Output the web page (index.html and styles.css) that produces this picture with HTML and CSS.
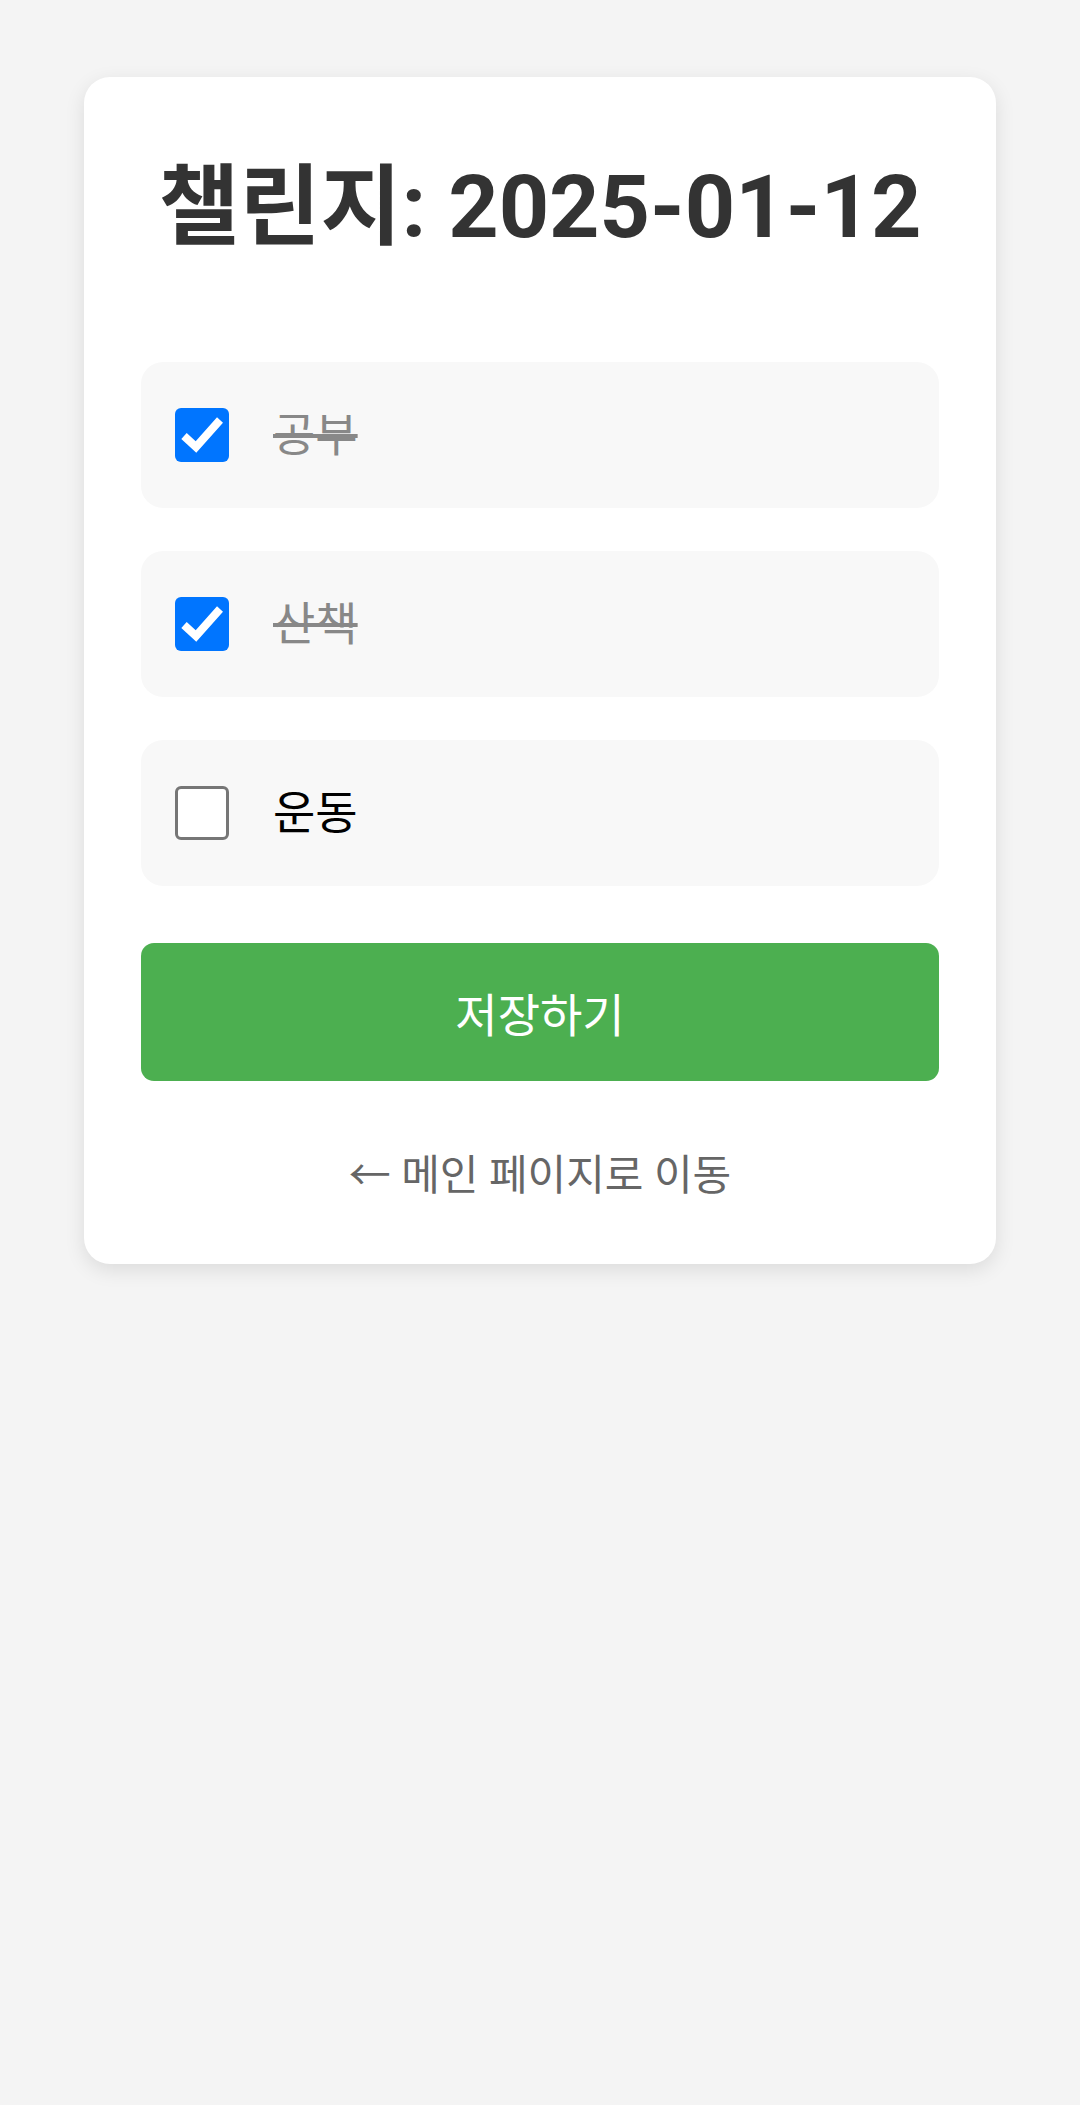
FILE: index.html
```html
<!DOCTYPE html>
<html lang="ko">
	<head>
		<meta charset="UTF-8">
		<title>챌린지</title>
		<link rel="stylesheet" href="styles.css">
	</head>
	<body>
		<div class="wrap">
			<div class="card">
				<h1 class="title">챌린지: 2025-01-12</h1>

				<label class="task done">
					<span class="box on">
						<svg viewBox="0 0 54 54" width="54" height="54"><path d="M9 28 L21 39 L45 12" fill="none" stroke="#fff" stroke-width="8"/></svg>
					</span>
					<span class="name">공부</span>
				</label>
				<label class="task done">
					<span class="box on">
						<svg viewBox="0 0 54 54" width="54" height="54"><path d="M9 28 L21 39 L45 12" fill="none" stroke="#fff" stroke-width="8"/></svg>
					</span>
					<span class="name">산책</span>
				</label>
				<label class="task">
					<span class="box"></span>
					<span class="name">운동</span>
				</label>

				<button class="save">저장하기</button>

				<a href="javascript:;" class="back">← 메인 페이지로 이동</a>
			</div>
		</div>
	</body>
</html>
```

FILE: styles.css
```css
* {margin:0; padding:0; box-sizing:border-box;}
body {
	background:#f4f4f4;
	font-family:Roboto, "Noto Sans CJK KR", sans-serif;
}
.wrap {
	padding:77px 84px;
}
.card {
	background:#fff;
	border-radius:26px;
	padding:77px 57px 62px;
	box-shadow:0 6px 20px rgba(0,0,0,0.1);
}
.title {
	font-size:88px;
	font-weight:700;
	line-height:1.2;
	color:#333;
	text-align:center;
	white-space:nowrap;
	margin:0 0 102px;
}
.task {
	display:flex;
	align-items:center;
	gap:44px;
	height:146px;
	padding:0 34px;
	background:#f8f8f8;
	border-radius:22px;
	margin-bottom:43px;
	cursor:pointer;
}
.box {
	width:54px;
	height:54px;
	border:3px solid #767676;
	border-radius:6px;
	background:#fff;
	flex:none;
}
.box.on {
	border:0;
	background:#0075ff;
}
.box svg {
	display:block;
}
.name {
	font-size:46px;
	color:#000;
	padding-bottom:8px;
}
.done .name {
	color:#888;
	text-decoration:line-through;
}
.save {
	display:block;
	width:100%;
	height:138px;
	margin-top:57px;
	border:0;
	border-radius:13px;
	background:#4caf50;
	color:#fff;
	font-family:inherit;
	font-size:46px;
	cursor:pointer;
}
.back {
	display:block;
	margin-top:60px;
	text-align:center;
	font-size:42px;
	color:#666;
	text-decoration:none;
}
```
